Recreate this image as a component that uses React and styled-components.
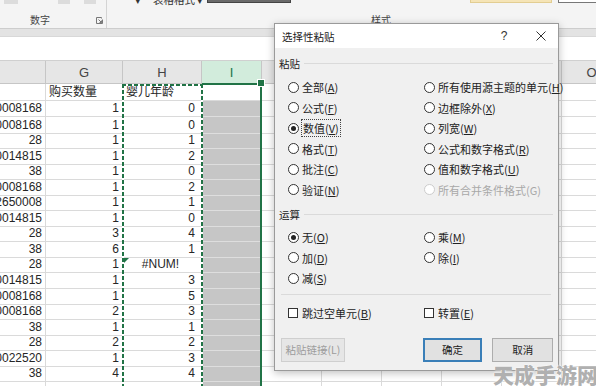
import React from "react";
import styled, { createGlobalStyle, css } from "styled-components";

const GlobalStyle = createGlobalStyle`
  html, body { margin: 0; padding: 0; background: #fff; }
  body { font-family: "Liberation Sans", "Noto Sans CJK SC", sans-serif; overflow: hidden; }
`;

const GREEN = "#217346";

const Screen = styled.div`
  position: relative;
  width: 596px;
  height: 386px;
  overflow: hidden;
  background: #fff;
`;

/* ---------- ribbon ---------- */

const Ribbon = styled.div`
  display: flex;
  height: 28px;
  background: #f4f4f4;
  font-family: "Noto Sans CJK SC", sans-serif;
  font-size: 10px;
  color: #444;
  overflow: hidden;
`;

const RibbonGroup = styled.div`
  width: ${(p) => p.$w}px;
  flex: none;
  display: flex;
  flex-direction: column;
  justify-content: space-between;
  border-right: ${(p) => (p.$sep ? "1px solid #d4d4d4" : "none")};
`;

const TopRow = styled.div`
  display: flex;
  align-items: flex-start;
  height: 6px;
`;

const GroupFoot = styled.div`
  display: flex;
  align-items: center;
  height: 14px;
  padding: 0 3px 0 ${(p) => p.$pad}px;
  margin-bottom: 1px;
`;

const GroupLabelText = styled.span`
  flex: 1;
  line-height: 14px;
`;

const FaintIcon = styled.div`
  width: ${(p) => p.$w}px;
  height: 4px;
  margin-left: ${(p) => p.$ml}px;
  background: #dcdcdc;
`;

const TopText = styled.span`
  margin-left: ${(p) => p.$ml}px;
  margin-top: -5px;
  line-height: 10px;
  font-size: 10.5px;
  color: #333;
  white-space: nowrap;
`;

const GalleryBox = styled.div`
  margin-left: ${(p) => p.$ml}px;
  width: ${(p) => p.$w}px;
  height: 3px;
  box-sizing: border-box;
  background: ${(p) => p.$bg};
  border: 1px solid ${(p) => p.$bd};
  border-top: none;
`;

const Band = styled.div`
  height: 9px;
  box-sizing: border-box;
  background: #e3e3e3;
  border-top: 1px solid #cdcdcd;
  border-bottom: 1px solid #d8d8d8;
`;

const FormulaBar = styled.div`
  height: 24px;
  box-sizing: border-box;
  background: #fff;
  border-bottom: 1px solid #d0d0d0;
`;

/* ---------- sheet ---------- */

const Sheet = styled.div`
  position: relative;
`;

const Row = styled.div`
  display: flex;
  height: ${(p) => p.$h}px;
`;

const HeaderCell = styled.div`
  width: ${(p) => p.$w}px;
  flex: none;
  box-sizing: border-box;
  display: flex;
  align-items: center;
  justify-content: center;
  font-size: 13px;
  color: #444;
  background: #e6e6e6;
  border-right: 1px solid #c6c6c6;
  border-bottom: 1px solid #c6c6c6;
  ${(p) =>
    p.$active &&
    css`
      background: #d2ecdc;
      color: ${GREEN};
    `}
`;

const Cell = styled.div`
  position: relative;
  width: ${(p) => p.$w}px;
  flex: none;
  box-sizing: border-box;
  display: flex;
  align-items: flex-end;
  justify-content: ${(p) => p.$align};
  padding: 0 ${(p) => p.$pr}px 0 3px;
  font-size: 12px;
  line-height: 15px;
  color: #262626;
  white-space: nowrap;
  overflow: hidden;
  background: ${(p) => (p.$fill ? "#c6c6c6" : "#fff")};
  border-right: 1px solid ${(p) => (p.$fill ? "#d6d6d6" : "#dadada")};
  border-bottom: 1px solid ${(p) => (p.$fill ? "#dedede" : "#dadada")};
  ${(p) =>
    p.$flag &&
    css`
      &::before {
        content: "";
        position: absolute;
        left: 1px;
        top: 0;
        border-top: 5px solid ${GREEN};
        border-right: 5px solid transparent;
      }
    `}
`;

const Selection = styled.div`
  position: absolute;
  left: 202px;
  top: 22px;
  width: 60px;
  bottom: -10px;
  box-sizing: border-box;
  border: 2px solid ${GREEN};
  border-left: none;
  pointer-events: none;
`;

const FillHandle = styled.div`
  position: absolute;
  left: 258px;
  top: 19px;
  width: 6px;
  height: 6px;
  box-sizing: border-box;
  background: ${GREEN};
  outline: 1px solid #fff;
`;

const dash = (dir) =>
  `repeating-linear-gradient(${dir}, ${GREEN} 0 4px, #fff 4px 6px)`;

const MarchingAnts = styled.div`
  position: absolute;
  left: 122px;
  top: 23px;
  width: 81px;
  bottom: -10px;
  pointer-events: none;
  background: ${dash("90deg")} left top / 100% 2px no-repeat,
    ${dash("180deg")} left top / 2px 100% no-repeat,
    ${dash("180deg")} right top / 2px 100% no-repeat;
`;

/* ---------- dialog ---------- */

const Dialog = styled.div`
  position: absolute;
  left: 274px;
  top: 23px;
  width: 285px;
  height: 348px;
  box-sizing: border-box;
  display: flex;
  flex-direction: column;
  border: 1px solid #9a9a9a;
  box-shadow: 0 2px 8px rgba(0, 0, 0, 0.25);
  font-family: "Noto Sans CJK SC", sans-serif;
  color: #222;
`;

const TitleBar = styled.div`
  height: 24px;
  flex: none;
  display: flex;
  align-items: center;
  padding: 0 10px 0 7px;
  background: #fff;
  font-size: 10.5px;
`;

const Title = styled.span`
  flex: 1;
`;

const TitleButton = styled.span`
  width: 14px;
  display: flex;
  justify-content: center;
  margin-left: ${(p) => p.$ml}px;
  font-family: "Liberation Sans", sans-serif;
  font-size: 12px;
  color: #333;
`;

const Body = styled.div`
  flex: 1;
  display: flex;
  flex-direction: column;
  padding: 6px 5px 0 4px;
  background: #f0f0f0;
`;

const GroupTitle = styled.div`
  display: flex;
  align-items: center;
  gap: 4px;
  height: 18px;
  margin-top: ${(p) => p.$mt}px;
  font-size: 10.5px;
  &::after {
    content: "";
    flex: 1;
    border-top: 1px solid #dadada;
  }
`;

const OptionGrid = styled.div`
  display: grid;
  grid-template-columns: 136px 1fr;
  grid-auto-rows: ${(p) => p.$rh}px;
  margin-top: ${(p) => p.$mt}px;
  padding-left: 9px;
`;

const Option = styled.label`
  display: flex;
  align-items: center;
  gap: 3px;
  font-size: 11px;
  white-space: nowrap;
  color: ${(p) => (p.$disabled ? "#a8a8a8" : "#222")};
`;

const RadioCircle = styled.span`
  position: relative;
  width: 11px;
  height: 11px;
  flex: none;
  box-sizing: border-box;
  border-radius: 50%;
  background: #fff;
  border: 1px solid ${(p) => (p.$disabled ? "#cccccc" : "#333")};
  ${(p) =>
    p.$checked &&
    css`
      &::after {
        content: "";
        position: absolute;
        inset: 2px;
        border-radius: 50%;
        background: #222;
      }
    `}
`;

const CheckBox = styled.span`
  width: 10px;
  height: 10px;
  flex: none;
  box-sizing: border-box;
  margin-left: 0px;
  margin-right: 1px;
  background: #fff;
  border: 1px solid #333;
`;

const Focus = styled.span`
  outline: 1px dotted #444;
  outline-offset: 0;
  padding: 0 1px;
`;

const Separator = styled.div`
  margin: 5px 2px 0;
  border-top: 1px solid #dadada;
`;

const ButtonRow = styled.div`
  display: flex;
  align-items: center;
  margin-top: 15px;
  padding-left: 2px;
`;

const Button = styled.button`
  height: 24px;
  width: ${(p) => p.$w}px;
  margin-left: ${(p) => p.$ml}px;
  box-sizing: border-box;
  font-family: "Noto Sans CJK SC", sans-serif;
  font-size: 10.5px;
  padding: 0;
  color: ${(p) => (p.disabled ? "#9c9c9c" : "#222")};
  background: ${(p) => (p.disabled ? "#e6e6e6" : "#e1e1e1")};
  border: ${(p) =>
    p.$primary
      ? "2px solid #3a7fb8"
      : p.disabled
      ? "1px solid #cfcfcf"
      : "1px solid #adadad"};
`;

const Watermark = styled.div`
  position: absolute;
  right: -2px;
  bottom: -3px;
  font-family: "Noto Sans CJK SC", sans-serif;
  font-weight: 900;
  font-size: 21px;
  letter-spacing: 0px;
  color: rgba(150, 150, 150, 0.75);
  text-shadow: 0 0 2px #fff, 0 0 1px #fff;
  pointer-events: none;
`;

/* ---------- data ---------- */

const cols = [46, 77, 79, 60, 60, 60, 60, 60, 60, 60];
const headers = ["", "G", "H", "I", "J", "K", "L", "M", "N", "O"];

const rows = [
  ["", "购买数量", "婴儿年龄"],
  ["0008168", "1", "0"],
  ["0008168", "1", "0"],
  ["28", "1", "1"],
  ["0014815", "1", "2"],
  ["38", "1", "0"],
  ["0008168", "1", "2"],
  ["2650008", "1", "1"],
  ["0014815", "1", "0"],
  ["28", "3", "4"],
  ["38", "6", "1"],
  ["28", "1", "#NUM!"],
  ["0014815", "1", "3"],
  ["0008168", "1", "5"],
  ["0008168", "2", "3"],
  ["38", "1", "1"],
  ["28", "2", "2"],
  ["0022520", "1", "3"],
  ["38", "4", "4"],
  ["", "", ""],
];

const pasteOptions = [
  ["全部", "A"],
  ["所有使用源主题的单元", "H"],
  ["公式", "F"],
  ["边框除外", "X"],
  ["数值", "V", "checked"],
  ["列宽", "W"],
  ["格式", "T"],
  ["公式和数字格式", "R"],
  ["批注", "C"],
  ["值和数字格式", "U"],
  ["验证", "N"],
  ["所有合并条件格式", "G", "disabled"],
];

const opOptions = [
  ["无", "O", "checked"],
  ["乘", "M"],
  ["加", "D"],
  ["除", "I"],
  ["减", "S"],
];

function Launcher() {
  return (
    <svg width="7" height="7" viewBox="0 0 7 7">
      <path d="M0.5 0.5h5v1M0.5 0.5v6h6v-4" fill="none" stroke="#777" />
      <path d="M2.5 2.5l3 3M5.5 3.5v2h-2" fill="none" stroke="#777" />
    </svg>
  );
}

function CloseIcon() {
  return (
    <svg width="10" height="10" viewBox="0 0 10 10">
      <path d="M0.5 0.5l9 9M9.5 0.5l-9 9" stroke="#333" strokeWidth="1" />
    </svg>
  );
}

function RadioOption({ text, hotkey, flag }) {
  const disabled = flag === "disabled";
  const checked = flag === "checked";
  const label = (
    <span>
      {text}(
      {disabled ? hotkey : <u>{hotkey}</u>})
    </span>
  );
  return (
    <Option $disabled={disabled}>
      <RadioCircle $checked={checked} $disabled={disabled} />
      {text === "数值" ? <Focus>{label}</Focus> : label}
    </Option>
  );
}

function rowHeight(i) {
  return i < 3 ? 16.5 : 15.56;
}

export default function App() {
  return (
    <>
      <GlobalStyle />
      <Screen>
        <Ribbon>
          <RibbonGroup $w={106} $sep>
            <TopRow>
              <FaintIcon $w={14} $ml={4} />
              <FaintIcon $w={12} $ml={40} />
              <FaintIcon $w={12} $ml={14} />
            </TopRow>
            <GroupFoot $pad={30}>
              <GroupLabelText>数字</GroupLabelText>
              <Launcher />
            </GroupFoot>
          </RibbonGroup>
          <RibbonGroup $w={490}>
            <TopRow>
              <TopText $ml={28}>▾</TopText>
              <TopText $ml={12}>表格格式 ▾</TopText>
              <GalleryBox $ml={4} $w={85} $bg="#6a6a6a" $bd="#444" />
              <GalleryBox $ml={179} $w={83} $bg="#f5e4b6" $bd="#e2cd92" />
              <GalleryBox $ml={6} $w={40} $bg="#fff" $bd="#777" />
            </TopRow>
            <GroupFoot $pad={264}>
              <GroupLabelText>样式</GroupLabelText>
            </GroupFoot>
          </RibbonGroup>
        </Ribbon>
        <Band />
        <FormulaBar />

        <Sheet>
          <Row $h={23}>
            {headers.map((h, i) => (
              <HeaderCell key={i} $w={cols[i]} $active={h === "I"}>
                {h}
              </HeaderCell>
            ))}
          </Row>
          {rows.map((r, ri) => (
            <Row key={ri} $h={rowHeight(ri)}>
              {cols.map((w, ci) => {
                const v = ci < 3 ? r[ci] : "";
                const isText = ri === 0;
                const isError = v === "#NUM!";
                return (
                  <Cell
                    key={ci}
                    $w={w}
                    $align={isText ? "flex-start" : isError ? "center" : "flex-end"}
                    $pr={ci === 2 ? 6 : 3}
                    $fill={ci === 3 && ri > 0}
                    $flag={isError && ci === 2}
                  >
                    {v}
                  </Cell>
                );
              })}
            </Row>
          ))}
          <Selection />
          <MarchingAnts />
          <FillHandle />
        </Sheet>

        <Dialog>
          <TitleBar>
            <Title>选择性粘贴</Title>
            <TitleButton>?</TitleButton>
            <TitleButton $ml={23}>
              <CloseIcon />
            </TitleButton>
          </TitleBar>
          <Body>
            <GroupTitle $mt={0}>粘贴</GroupTitle>
            <OptionGrid $rh={20.5} $mt={5}>
              {pasteOptions.map(([t, k, f]) => (
                <RadioOption key={t} text={t} hotkey={k} flag={f} />
              ))}
            </OptionGrid>
            <GroupTitle $mt={5}>运算</GroupTitle>
            <OptionGrid $rh={20.5} $mt={4}>
              {opOptions.map(([t, k, f]) => (
                <RadioOption key={t} text={t} hotkey={k} flag={f} />
              ))}
            </OptionGrid>
            <Separator />
            <OptionGrid $rh={20} $mt={8}>
              <Option>
                <CheckBox />
                <span>
                  跳过空单元(<u>B</u>)
                </span>
              </Option>
              <Option>
                <CheckBox />
                <span>
                  转置(<u>E</u>)
                </span>
              </Option>
            </OptionGrid>
            <ButtonRow>
              <Button $w={64} $ml={0} disabled>
                粘贴链接(L)
              </Button>
              <Button $w={60} $ml={78} $primary>
                确定
              </Button>
              <Button $w={61} $ml={10}>
                取消
              </Button>
            </ButtonRow>
          </Body>
        </Dialog>

        <Watermark>天成手游网</Watermark>
      </Screen>
    </>
  );
}
